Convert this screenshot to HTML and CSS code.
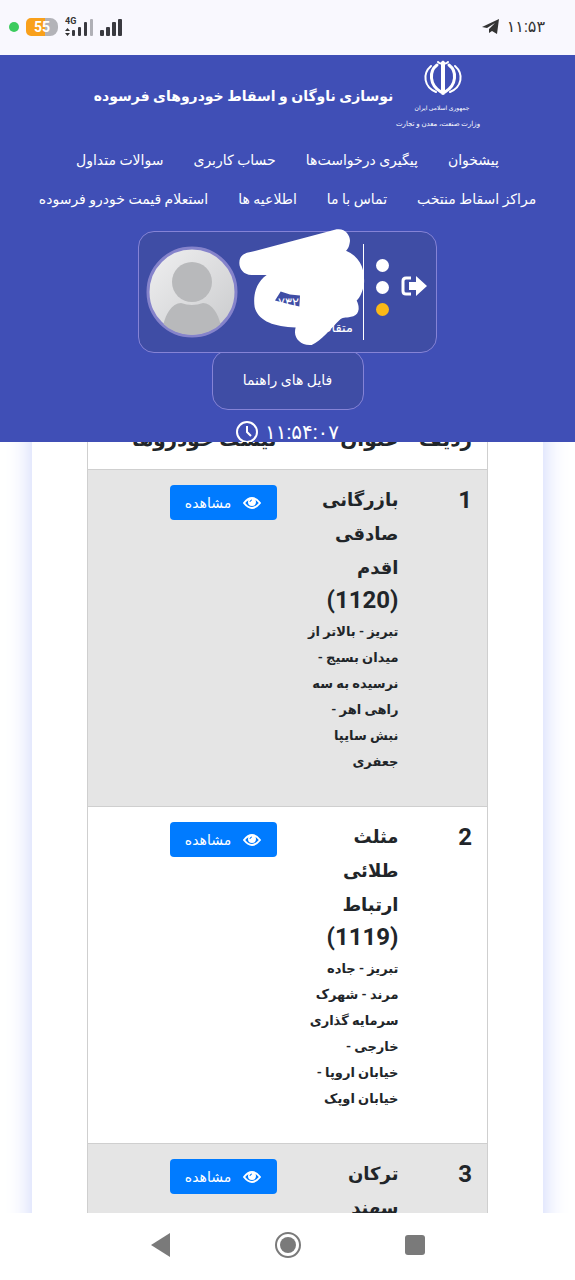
FILE: index.html
```html
<!DOCTYPE html>
<html lang="fa" dir="rtl">
<head>
    <meta charset="UTF-8">
    <meta name="viewport" content="width=device-width, initial-scale=1.0">
    <title>نوسازی ناوگان و اسقاط خودروهای فرسوده</title>
    <link rel="stylesheet" href="styles.css">
</head>
<body>

    <div class="status-bar" dir="ltr">
        <div class="status-left">
            <span class="privacy-dot"></span>
            <span class="battery">55</span>
            <svg class="signal" width="58" height="24" viewBox="0 0 58 24">
                <text x="0" y="9" class="signal-text">4G</text>
                <path d="M2.500 13l2.500 3h-5zM2.500 21l2.500-3h-5z" fill="#333"/>
                <g fill="#3a3a40">
                    <rect x="7" y="15" width="3" height="6" rx="1"/>
                    <rect x="13" y="12" width="3" height="9" rx="1"/>
                    <rect x="19" y="7" width="3" height="14" rx="1"/>
                    <rect x="25" y="4" width="3" height="17" rx="1" fill="#b0b0b6"/>
                    <rect x="35" y="15" width="4" height="6" rx="1"/>
                    <rect x="41" y="12" width="4" height="9" rx="1"/>
                    <rect x="47" y="7" width="4" height="14" rx="1"/>
                    <rect x="53" y="4" width="4" height="17" rx="1"/>
                </g>
            </svg>
        </div>
        <div class="status-right">
            <svg width="18" height="16" viewBox="0 0 18 16"><path d="M0 8L17 0L15 15L10 12L7 14L7 10L13 4L5 9Z" fill="#333"/></svg>
            <span>۱۱:۵۳</span>
        </div>
    </div>

    <div class="page">
        <header class="header">
            <div class="brand">
                <svg class="logo" width="86" height="74" viewBox="0 0 86 74">
                    <g fill="none" stroke="#fff" stroke-linecap="round">
                        <path d="M48 4v30" stroke-width="4"/>
                        <path d="M43 3q3 3 5 0q2 3 5 0" stroke-width="2"/>
                        <path d="M42 6c-8 6-8 20 4 27M54 6c8 6 8 20-4 27" stroke-width="3"/>
                        <path d="M36 7c-9 8-7 21 5 26M60 7c9 8 7 21-5 26" stroke-width="2"/>
                    </g>
                    <text x="47" y="51" class="logo-text">جمهوری اسلامی ایران</text>
                    <text x="43" y="67" class="logo-text logo-ministry">وزارت صنعت، معدن و تجارت</text>
                </svg>
                <h1>نوسازی ناوگان و اسقاط خودروهای فرسوده</h1>
            </div>
            <nav>
                <ul class="menu">
                    <li><a href="#">پیشخوان</a></li>
                    <li><a href="#">پیگیری درخواست‌ها</a></li>
                    <li><a href="#">حساب کاربری</a></li>
                    <li><a href="#">سوالات متداول</a></li>
                    <li><a href="#">مراکز اسقاط منتخب</a></li>
                    <li><a href="#">تماس با ما</a></li>
                    <li><a href="#">اطلاعیه ها</a></li>
                    <li><a href="#">استعلام قیمت خودرو فرسوده</a></li>
                </ul>
            </nav>
            <div class="user-box">
                <div class="user-actions">
                    <button class="logout" aria-label="خروج">
                        <svg width="26" height="22" viewBox="0 0 26 22">
                            <path d="M10 3H5Q2 3 2 6V16Q2 19 5 19H10" fill="none" stroke="#fff" stroke-width="3"/>
                            <path d="M8 7h7V1l11 10l-11 10v-6H8z" fill="#fff"/>
                        </svg>
                    </button>
                    <div class="dots">
                        <span></span>
                        <span></span>
                        <span class="dot-active"></span>
                    </div>
                </div>
                <div class="user-info">
                    <span class="user-code">۷۳۲</span>
                    <span>متقاضی</span>
                </div>
                <svg class="avatar" width="92" height="92" viewBox="0 0 92 92">
                    <defs>
                        <linearGradient id="avatarBg" x1="0" y1="0" x2="1" y2="1">
                            <stop offset="0" stop-color="#f0f0f1"/>
                            <stop offset="1" stop-color="#c9cacc"/>
                        </linearGradient>
                        <clipPath id="avatarClip"><circle cx="46" cy="46" r="43"/></clipPath>
                    </defs>
                    <circle cx="46" cy="46" r="44" fill="url(#avatarBg)" stroke="#8583cb" stroke-width="3"/>
                    <g clip-path="url(#avatarClip)" fill="#b8b9bb">
                        <circle cx="46" cy="36" r="20"/>
                        <path d="M16 92C16 70 26 57 35 57Q46 61 57 57C66 57 76 70 76 92Z"/>
                    </g>
                </svg>
                <svg class="cover" viewBox="18 33 897 363" preserveAspectRatio="none">
                    <path fill="#fff" fill-rule="evenodd" d="M328 128C328 105 345 98 365 95L620 28C645 24 660 45 660 62C658 78 655 85 648 92C690 110 705 145 702 190C698 215 690 230 680 240C690 260 688 280 670 287C650 292 640 290 632 295C600 325 575 360 545 372C515 375 495 355 495 335C495 328 496 323 497 320C430 318 385 300 374 260C368 220 380 185 410 164L365 164C340 163 328 145 328 128ZM435 240L452 213L480 222L510 225L508 258L475 250Z"/>
                </svg>
            </div>
            <a href="#" class="guide">فایل های راهنما</a>
            <div class="clock">
                <span>۱۱:۵۴:۰۷</span>
                <svg width="22" height="22" viewBox="0 0 22 22" fill="none" stroke="#fff">
                    <circle cx="11" cy="11" r="10" stroke-width="2"/>
                    <path d="M11 5v6l4 4" stroke-width="2"/>
                </svg>
            </div>
        </header>

        <main class="content">
            <table class="centers">
                <thead>
                    <tr>
                        <th class="col-num">ردیف</th>
                        <th class="col-name">عنوان</th>
                        <th>لیست خودروها</th>
                    </tr>
                </thead>
                <tbody>
                    <tr>
                        <td class="number">1</td>
                        <td>
                            <h2>بازرگانی<br>صادقی<br>اقدم<br><span class="code">(1120)</span></h2>
                            <p>تبریز - بالاتر از<br>میدان بسیج -<br>نرسیده به سه<br>راهی اهر -<br>نبش سایپا<br>جعفری</p>
                        </td>
                        <td class="action">
                            <button class="view">
                                <svg width="18" height="12" viewBox="0 0 18 12"><path d="M1 6Q9-4 17 6Q9 16 1 6Z" fill="none" stroke="#fff" stroke-width="2"/><circle cx="9" cy="5" r="4" fill="#fff"/><path d="M7 5q0-2 2-2" fill="none" stroke="#007bff"/></svg>
                                مشاهده
                            </button>
                        </td>
                    </tr>
                    <tr>
                        <td class="number">2</td>
                        <td>
                            <h2>مثلث<br>طلائی<br>ارتباط<br><span class="code">(1119)</span></h2>
                            <p>تبریز - جاده<br>مرند - شهرک<br>سرمایه گذاری<br>خارجی -<br>خیابان اروپا -<br>خیابان اوپک</p>
                        </td>
                        <td class="action">
                            <button class="view">
                                <svg width="18" height="12" viewBox="0 0 18 12"><path d="M1 6Q9-4 17 6Q9 16 1 6Z" fill="none" stroke="#fff" stroke-width="2"/><circle cx="9" cy="5" r="4" fill="#fff"/><path d="M7 5q0-2 2-2" fill="none" stroke="#007bff"/></svg>
                                مشاهده
                            </button>
                        </td>
                    </tr>
                    <tr>
                        <td class="number">3</td>
                        <td>
                            <h2>ترکان<br>سهند</h2>
                        </td>
                        <td class="action">
                            <button class="view">
                                <svg width="18" height="12" viewBox="0 0 18 12"><path d="M1 6Q9-4 17 6Q9 16 1 6Z" fill="none" stroke="#fff" stroke-width="2"/><circle cx="9" cy="5" r="4" fill="#fff"/><path d="M7 5q0-2 2-2" fill="none" stroke="#007bff"/></svg>
                                مشاهده
                            </button>
                        </td>
                    </tr>
                </tbody>
            </table>
        </main>
    </div>

    <div class="system-nav" dir="ltr">
        <button aria-label="بازگشت"><svg width="28" height="28" viewBox="0 0 28 28"><path d="M23 2v24L4 14z" fill="#7a7a7a"/></svg></button>
        <button aria-label="خانه"><svg width="28" height="28" viewBox="0 0 28 28"><circle cx="14" cy="14" r="12" fill="none" stroke="#7a7a7a" stroke-width="2"/><circle cx="14" cy="14" r="8" fill="#7a7a7a"/></svg></button>
        <button aria-label="برنامه‌های اخیر"><svg width="28" height="28" viewBox="0 0 28 28"><rect x="4" y="4" width="20" height="20" rx="3" fill="#7a7a7a"/></svg></button>
    </div>

</body>
</html>
```
FILE: styles.css
```css
* {
    box-sizing: border-box;
}
body {
    font-family: Roboto, "DejaVu Sans", sans-serif;
    margin: 0;
    height: 100vh;
    display: flex;
    flex-direction: column;
    overflow: hidden;
    background-color: #fff;
    color: #212529;
}
button {
    font-family: inherit;
    border: none;
    padding: 0;
    background: none;
    cursor: pointer;
}
svg {
    flex-shrink: 0;
}
.status-bar {
    height: 55px;
    padding: 0 30px 2px 9px;
    display: flex;
    justify-content: space-between;
    align-items: center;
    background-color: #f9f8fe;
}
.status-left, .status-right {
    display: flex;
    align-items: center;
    gap: 7px;
}
.status-right {
    color: #333;
    font-size: 16px;
}
.privacy-dot {
    width: 10px;
    height: 10px;
    border-radius: 50%;
    background-color: #3ccb5e;
}
.battery {
    width: 32px;
    height: 18px;
    line-height: 18px;
    border-radius: 5px 8px 8px 5px;
    background: linear-gradient(to right, #f9a01b 58%, #b3b3b8 58%);
    color: #fff;
    font-size: 14px;
    font-weight: bold;
    text-align: center;
}
.signal-text {
    font-size: 9px;
    font-weight: bold;
    fill: #333;
}
.page {
    flex: 1;
    min-height: 0;
    overflow: hidden;
}
.header {
    position: sticky;
    top: 0;
    z-index: 1;
    height: 387px;
    padding-top: 4px;
    display: flex;
    flex-direction: column;
    align-items: center;
    overflow: hidden;
    background-color: #404fb6;
    color: #fff;
}
.brand {
    display: flex;
    align-items: center;
    gap: 2px;
}
.brand h1 {
    margin: 0;
    font-size: 14px;
    white-space: nowrap;
}
.logo-text {
    font-size: 6px;
    fill: #fff;
    text-anchor: middle;
}
.logo-ministry {
    font-size: 7px;
}
.menu {
    list-style-type: none;
    margin: 8px 0 0;
    padding: 0 20px;
    display: flex;
    flex-wrap: wrap;
    justify-content: center;
}
.menu a {
    display: block;
    padding: 0 15px;
    line-height: 39px;
    color: #fff;
    font-size: 14px;
    text-decoration: none;
    white-space: nowrap;
}
.user-box, .guide {
    border: 1px solid #8583d6;
    border-radius: 16px;
    background-color: #3f4da5;
    flex-shrink: 0;
}
.user-box {
    position: relative;
    width: 299px;
    height: 122px;
    margin-top: 12px;
    padding: 0 9px 0 7px;
    display: flex;
    align-items: center;
}
.user-actions {
    display: flex;
    align-items: center;
    gap: 12px;
    margin: 0 0 10px 12px;
}
.dots {
    display: flex;
    flex-direction: column;
    gap: 9px;
}
.dots span {
    width: 13px;
    height: 13px;
    border-radius: 50%;
    background-color: #fff;
}
.dots .dot-active {
    background-color: #fbb917;
}
.user-info {
    flex: 1;
    height: 96px;
    padding: 0 10px;
    border-right: 1px solid #fff;
    display: flex;
    flex-direction: column;
    justify-content: flex-end;
    font-size: 13px;
    line-height: 25px;
}
.user-code {
    padding-right: 54px;
}
.cover {
    position: absolute;
    top: -1px;
    left: -3px;
    width: 299px;
    height: 122px;
    overflow: visible;
}
.guide {
    width: 152px;
    margin-top: -3px;
    line-height: 58px;
    text-align: center;
    color: #fff;
    font-size: 14px;
    text-decoration: none;
}
.clock {
    display: flex;
    align-items: center;
    gap: 7px;
    margin-top: 8px;
    font-size: 20px;
    line-height: 28px;
}
/* list is scrolled a little under the sticky header */
.content {
    margin: -29px 32px 0;
    padding: 0 55px;
    background-color: #fff;
    box-shadow: 0 0 24px #c9d2fa;
}
.centers {
    width: 100%;
    table-layout: fixed;
    border-collapse: collapse;
    border: 1px solid #cfcfcf;
}
.centers th, .centers td {
    padding: 13px 15px 31px;
    text-align: right;
    vertical-align: top;
    border-top: 1px solid #cfcfcf;
}
.centers th {
    padding: 11px 15px 16px;
    font-size: 20px;
    line-height: 28px;
    white-space: nowrap;
}
.centers .action {
    padding-top: 15px;
}
.centers tbody tr:nth-child(odd) {
    background-color: #e5e5e5;
}
.col-num {
    width: 74px;
}
.col-name {
    width: 122px;
}
.centers .number, .centers h2 {
    margin: 0;
    font-size: 18px;
    line-height: 34px;
    font-weight: bold;
    white-space: nowrap;
}
.centers .number, .centers .code {
    font-size: 24px;
}
.centers .code {
    /* keeps the larger digits from stretching the line */
    line-height: 24px;
}
.centers p {
    margin: 0;
    font-size: 13px;
    line-height: 26px;
    font-weight: bold;
    white-space: nowrap;
}
.view {
    display: flex;
    align-items: center;
    justify-content: center;
    gap: 12px;
    width: 107px;
    height: 35px;
    border-radius: 4px;
    background-color: #007bff;
    color: #fff;
    font-size: 14px;
}
.system-nav {
    height: 67px;
    padding: 0 97px 4px;
    display: flex;
    justify-content: space-around;
    align-items: center;
    background-color: #fff;
}
.system-nav svg {
    display: block;
}
```
